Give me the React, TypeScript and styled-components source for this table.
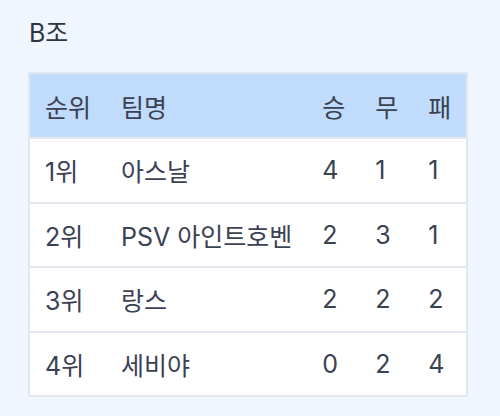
import React from "react";
import styled, { createGlobalStyle } from "styled-components";

const GlobalStyle = createGlobalStyle`
  body {
    margin: 0;
    background: #eff6ff;
    font-family: "Inter", "Noto Sans CJK KR", sans-serif;
    color: #3b4252;
  }
`;

const Page = styled.div`
  padding: 16px 28px;
`;

const Title = styled.h2`
  margin: 0 0 22px 1px;
  font-size: 25px;
  font-weight: 400;
  line-height: 34px;
  color: #2f3440;
`;

const Table = styled.table`
  border-collapse: collapse;
  background: #ffffff;
  border: 2px solid #e3e7ee;
  font-size: 25px;
`;

const HeadCell = styled.th`
  background: #c0dbfb;
  font-weight: 400;
  text-align: left;
  height: 63px;
  padding: 0 15px;
  color: #3a4150;
`;

const Row = styled.tr`
  border-top: 2px solid #e3e7ee;
`;

const Cell = styled.td`
  height: 62.5px;
  padding: 0 15px;
  text-align: left;
`;

type Team = { rank: number; name: string; w: number; d: number; l: number };

const teams: Team[] = [
  { rank: 1, name: "아스날", w: 4, d: 1, l: 1 },
  { rank: 2, name: "PSV 아인트호벤", w: 2, d: 3, l: 1 },
  { rank: 3, name: "랑스", w: 2, d: 2, l: 2 },
  { rank: 4, name: "세비야", w: 0, d: 2, l: 4 },
];

const App: React.FC = () => {
  return (
    <Page>
      <GlobalStyle />
      <Title>B조</Title>
      <Table>
        <thead>
          <tr>
            <HeadCell>순위</HeadCell>
            <HeadCell>팀명</HeadCell>
            <HeadCell>승</HeadCell>
            <HeadCell>무</HeadCell>
            <HeadCell>패</HeadCell>
          </tr>
        </thead>
        <tbody>
          {teams.map((t) => (
            <Row key={t.rank}>
              <Cell>{t.rank}위</Cell>
              <Cell>{t.name}</Cell>
              <Cell>{t.w}</Cell>
              <Cell>{t.d}</Cell>
              <Cell>{t.l}</Cell>
            </Row>
          ))}
        </tbody>
      </Table>
    </Page>
  );
};

export default App;
